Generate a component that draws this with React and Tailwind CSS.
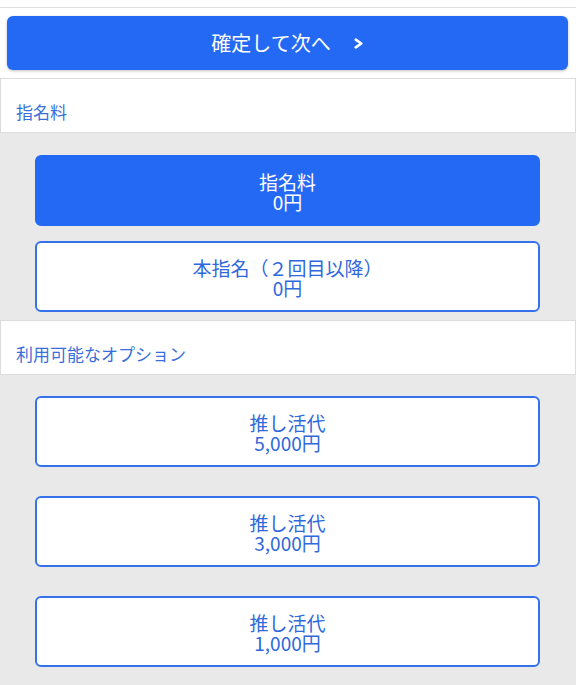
import React from 'react';

const font = { fontFamily: '"Noto Sans CJK JP", "Noto Sans", sans-serif' };

const options = [
  { id: 'oshi5000', name: '推し活代', price: '5,000円' },
  { id: 'oshi3000', name: '推し活代', price: '3,000円' },
  { id: 'oshi1000', name: '推し活代', price: '1,000円' },
];

const SectionHeader = ({ title }) => (
  <div className="h-[55px] w-full border border-[#dcdcdc] bg-white pl-[15px] pt-[21px] text-[17px] leading-[24px] text-[#3a6fdb]">
    {title}
  </div>
);

const ChoiceCard = ({ name, price, selected, className = '' }) => {
  const styles = selected
    ? 'bg-[#2469f3] border-[#2469f3] text-white'
    : 'bg-white border-[#3471ea] text-[#2f68dc]';

  return (
    <button
      className={`${styles} ${className} flex h-[71px] w-full flex-col items-center justify-center rounded-md border-2 pt-[2px] text-[19px] leading-[20px]`}
    >
      <div className="h-[20px] overflow-visible">{name}</div>
      <div className="h-[20px] overflow-visible">{price}</div>
    </button>
  );
};

export default function App() {
  return (
    <div className="min-h-screen w-full bg-[#e9e9e9]" style={font}>
      {/* top strip */}
      <div className="h-2 border-b border-[#dedede] bg-white" />

      {/* confirm button */}
      <div className="bg-white pb-2 pl-[7px] pr-2 pt-2">
        <button className="flex h-[54px] w-full items-center justify-center rounded-md bg-[#2469f3] text-[20px] text-white shadow-[0_1px_3px_rgba(0,0,0,0.25)]">
          <span>確定して次へ</span>
          <svg className="ml-[22px] h-[11px] w-[11px]" viewBox="0 0 10 10" fill="none" stroke="currentColor" strokeWidth={2.4} strokeLinecap="round" strokeLinejoin="round">
            <path d="M2.5 1.5L7.5 5L2.5 8.5" />
          </svg>
        </button>
      </div>

      <SectionHeader title="指名料" />
      <div className="pb-2 pl-[35px] pr-[36px] pt-[22px]">
        <ChoiceCard name="指名料" price="0円" selected />
        <ChoiceCard name="本指名（２回目以降）" price="0円" className="mt-[15px]" />
      </div>

      <SectionHeader title="利用可能なオプション" />
      <div className="flex flex-col gap-[29px] pb-5 pl-[35px] pr-[36px] pt-[21px]">
        {options.map((opt) => (
          <ChoiceCard key={opt.id} name={opt.name} price={opt.price} />
        ))}
      </div>
    </div>
  );
}
